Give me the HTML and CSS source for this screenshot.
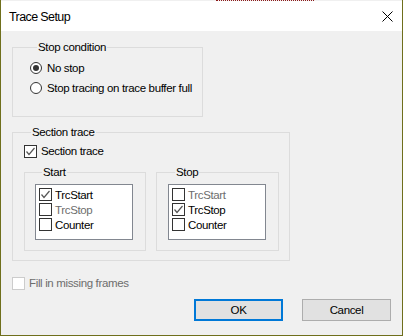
FILE: index.html
```html
<!DOCTYPE html>
<html lang="en">
<head>
  <meta charset="UTF-8" />
  <meta name="viewport" content="width=device-width, initial-scale=1.0" />
  <title>Trace Setup</title>
  <link rel="stylesheet" href="styles.css">
</head>
<body>

  <div class="window">
    <div class="edge-mark"></div>
    <div class="titlebar">
      <span class="title">Trace Setup</span>
      <svg class="close" width="11" height="11" viewBox="0 0 11 11">
        <path d="M0.5 0.5 L10.5 10.5 M10.5 0.5 L0.5 10.5" stroke="#000" stroke-width="1" fill="none" />
      </svg>
    </div>

    <div class="dialog">
      <fieldset class="group stop-cond">
        <legend>Stop condition</legend>
        <div class="opt"><span class="radio on"></span>No stop</div>
        <div class="opt"><span class="radio"></span>Stop tracing on trace buffer full</div>
      </fieldset>

      <fieldset class="group section">
        <legend>Section trace</legend>
        <div class="opt">
          <span class="check on"><svg width="11" height="11" viewBox="0 0 11 11"><path d="M1.5 5.5 L4 8.5 L9.5 2" stroke="#555" stroke-width="1.2" fill="none" /></svg></span>
          Section trace
        </div>

        <div class="pair">
          <fieldset class="group sub">
            <legend>Start</legend>
            <div class="list">
              <div class="item"><span class="check on"><svg width="11" height="11" viewBox="0 0 11 11"><path d="M1.5 5.5 L4 8.5 L9.5 2" stroke="#555" stroke-width="1.2" fill="none" /></svg></span>TrcStart</div>
              <div class="item off"><span class="check"></span>TrcStop</div>
              <div class="item"><span class="check"></span>Counter</div>
            </div>
          </fieldset>
          <fieldset class="group sub wide">
            <legend>Stop</legend>
            <div class="list">
              <div class="item off"><span class="check"></span>TrcStart</div>
              <div class="item"><span class="check on"><svg width="11" height="11" viewBox="0 0 11 11"><path d="M1.5 5.5 L4 8.5 L9.5 2" stroke="#555" stroke-width="1.2" fill="none" /></svg></span>TrcStop</div>
              <div class="item"><span class="check"></span>Counter</div>
            </div>
          </fieldset>
        </div>
      </fieldset>

      <div class="opt fill off"><span class="check faint"></span>Fill in missing frames</div>

      <div class="buttons">
        <button class="btn default">OK</button>
        <button class="btn">Cancel</button>
      </div>
    </div>
  </div>

</body>
</html>
```

FILE: styles.css
```css
body {
  margin: 0;
  padding: 0;
  background: #f0f0f0;
  font-family: "Liberation Sans", Arial, sans-serif;
  font-size: 11.5px;
  letter-spacing: -0.35px;
  color: #000;
}
.window {
  width: 403px;
  height: 336px;
  box-sizing: border-box;
  border-left: 1px solid #6f6f1c;
  border-right: 1px solid #6f6f1c;
  border-bottom: 1px solid #6f6f1c;
  background: #f0f0f0;
}
.edge-mark {
  height: 0;
  width: 98px;
  margin-left: 215px;
  border-top: 1px dotted #8b1a1a;
}
.titlebar {
  height: 30px;
  background: #fff;
  display: flex;
  align-items: center;
  justify-content: space-between;
  padding: 0 9px 0 8px;
}
.title {
  font-size: 12.5px;
  letter-spacing: -0.6px;
  margin-top: 2px;
}
.close {
  margin-top: 1px;
}
.dialog {
  padding: 0 11px;
}
.group {
  margin: 0;
  min-width: 0;
  border: 1px solid #dcdcdc;
  box-sizing: border-box;
}
.group legend {
  margin-left: 7px;
  padding: 0 1px;
  line-height: 13px;
}
.stop-cond {
  width: 191px;
  margin-top: 10px;
  padding: 4px 0 18px 17px;
}
.section {
  width: 278px;
  margin-top: 9px;
  padding: 2px 10px 9px 11px;
}
.opt {
  height: 20px;
  display: flex;
  align-items: center;
  gap: 5px;
}
.section > .opt {
  gap: 4px;
}
.radio {
  width: 12px;
  height: 12px;
  box-sizing: border-box;
  border: 1px solid #333;
  border-radius: 50%;
  background: #fff;
  display: flex;
  align-items: center;
  justify-content: center;
}
.radio.on::after {
  content: "";
  width: 6px;
  height: 6px;
  border-radius: 50%;
  background: #333;
}
.check {
  width: 13px;
  height: 13px;
  box-sizing: border-box;
  border: 1px solid #333;
  background: #fff;
  display: flex;
  align-items: center;
  justify-content: center;
  flex-shrink: 0;
}
.check svg {
  display: block;
}
.check.faint {
  border-color: #cccccc;
}
.pair {
  display: flex;
  gap: 10px;
  margin-top: 5px;
}
.sub {
  width: 122px;
  padding: 5px 0 10px 10px;
}
.sub.wide {
  width: 123px;
  padding-left: 11px;
}
.list {
  width: 98px;
  height: 56px;
  box-sizing: border-box;
  border: 1px solid #828790;
  background: #fff;
  padding: 2px 0 0 3px;
}
.item {
  height: 15px;
  display: flex;
  align-items: center;
  gap: 3px;
}
.off {
  color: #6d6d6d;
}
.fill {
  margin-top: 12px;
  gap: 4px;
}
.buttons {
  display: flex;
  justify-content: flex-end;
  gap: 19px;
  margin-top: 6px;
}
.btn {
  width: 89px;
  height: 22px;
  box-sizing: border-box;
  background: #e1e1e1;
  border: 1px solid #adadad;
  font-family: "Liberation Sans", Arial, sans-serif;
  font-size: 11.5px;
  letter-spacing: -0.35px;
  color: #000;
  padding: 0;
}
.btn.default {
  border: 2px solid #0078d7;
}
```
